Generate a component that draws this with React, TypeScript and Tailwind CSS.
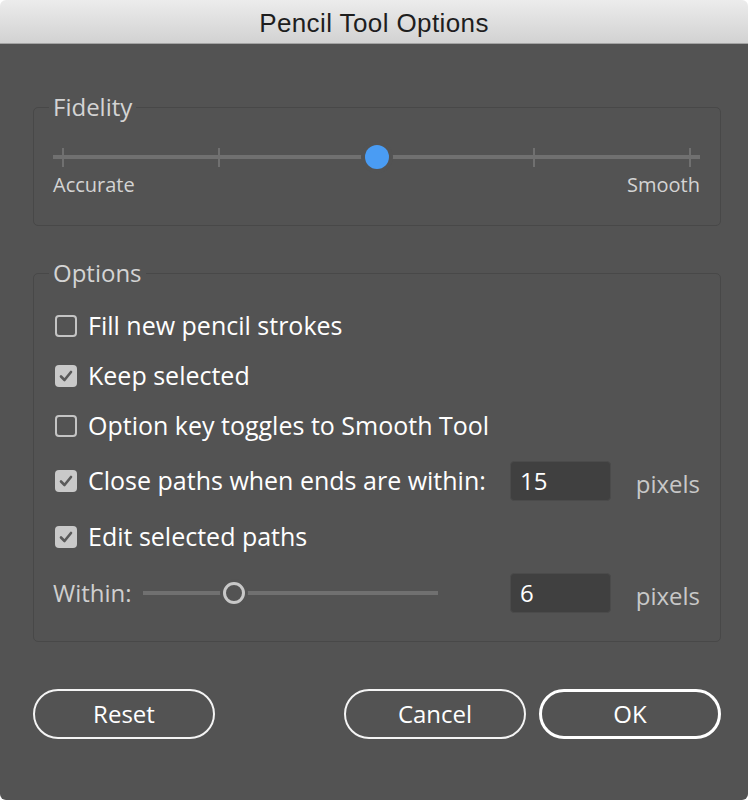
import React from 'react';

const font = { fontFamily: '"Open Sans", "Noto Sans", sans-serif' };

const Checkbox = ({ checked }: { checked: boolean }) =>
  checked ? (
    <span className="flex h-[22px] w-[22px] shrink-0 items-center justify-center rounded-[4px] bg-[#c9c9c9]">
      <svg width="14" height="12" viewBox="0 0 14 12" fill="none">
        <path d="M2 6.5 L5.5 10 L12 2" stroke="#5a5a5a" strokeWidth="2.6" strokeLinecap="round" strokeLinejoin="round" />
      </svg>
    </span>
  ) : (
    <span className="h-[22px] w-[22px] shrink-0 rounded-[4px] border-2 border-[#c4c4c4]" />
  );

const NumberBox = ({ value }: { value: string }) => (
  <div className="flex h-[40px] w-[101px] shrink-0 items-center rounded-[4px] border border-[#4b4b4b] bg-[#404040] pl-[9px] text-[24px] text-white">
    {value}
  </div>
);

const Option = ({ label, checked, h }: { label: string; checked: boolean; h: string }) => (
  <div className={`flex items-center gap-[11px] pl-[21px] ${h}`}>
    <Checkbox checked={checked} />
    <span className="text-[25px] text-white">{label}</span>
  </div>
);

export default function App() {
  const ticks = [10, 166, 324, 481, 637];

  return (
    <div className="h-[800px] w-[748px] bg-white" style={font}>
      <div className="flex h-full flex-col overflow-hidden rounded-[6px]">
        <div
          className="flex h-[44px] shrink-0 items-center justify-center border-b border-[#a3a3a3] bg-gradient-to-b from-[#ececec] to-[#d2d2d2] pt-[4px] text-[26px] tracking-[0.4px] text-[#1e1e1e]"
          style={{ fontFamily: '"Liberation Sans", Arial, sans-serif' }}
        >
          Pencil Tool Options
        </div>

        <div className="flex-1 bg-[#535353] pl-[33px] pr-[27px] pt-[50px]">
          <fieldset className="rounded-[5px] border border-[#484848] pl-[19px] pr-[20px] pb-[27px]">
            <legend className="-ml-[4px] h-[26px] px-[4px] text-[24px] leading-[26px] text-[#d4d4d4]">Fidelity</legend>
            <div className="relative mt-[25px] h-[24px]">
              <div className="absolute left-0 right-0 top-[10px] h-[4px] bg-[#707070]" />
              {ticks.map((t) => (
                <div key={t} className="absolute top-[3px] h-[19px] w-[2px] bg-[#707070]" style={{ left: t - 1 }} />
              ))}
              <div className="absolute top-0 h-[24px] w-[24px] rounded-full bg-[#4a9cf3] ring-[4px] ring-[#535353]" style={{ left: 312 }} />
            </div>
            <div className="mt-[3px] flex justify-between text-[20px] leading-[26px] text-[#d4d4d4]">
              <span>Accurate</span>
              <span>Smooth</span>
            </div>
          </fieldset>

          <fieldset className="mt-[34px] rounded-[5px] border border-[#484848] pb-[18px] pr-[20px]">
            <legend className="ml-[15px] h-[26px] px-[4px] text-[24px] leading-[26px] text-[#d4d4d4]">Options</legend>
            <div className="mt-[15px]" />
            <Option label="Fill new pencil strokes" checked={false} h="h-[50px]" />
            <Option label="Keep selected" checked h="h-[50px]" />
            <Option label="Option key toggles to Smooth Tool" checked={false} h="h-[50px]" />
            <div className="flex h-[60px] items-center pl-[21px]">
              <Checkbox checked />
              <span className="ml-[11px] flex-1 text-[25px] text-white">Close paths when ends are within:</span>
              <NumberBox value="15" />
              <span className="ml-[22px] w-[67px] pt-[6px] text-right text-[24px] text-[#c8c8c8]">pixels</span>
            </div>
            <Option label="Edit selected paths" checked h="h-[52px]" />
            <div className="flex h-[60px] items-center pl-[19px]">
              <span className="w-[90px] text-[24px] text-[#cfcfcf]">Within:</span>
              <div className="relative h-[22px] w-[295px]">
                <div className="absolute left-0 right-0 top-[9px] h-[4px] bg-[#707070]" />
                <div className="absolute top-0 h-[22px] w-[22px] rounded-full border-[3px] border-[#c8c8c8] bg-[#535353] ring-[3px] ring-[#535353]" style={{ left: 80 }} />
              </div>
              <div className="flex-1" />
              <NumberBox value="6" />
              <span className="ml-[22px] w-[67px] pt-[6px] text-right text-[24px] text-[#c8c8c8]">pixels</span>
            </div>
          </fieldset>

          <div className="mt-[47px] flex items-center text-[24px] text-white">
            <button className="flex h-[50px] w-[182px] items-center justify-center rounded-full border-2 border-[#f4f4f4]">Reset</button>
            <div className="flex-1" />
            <button className="flex h-[50px] w-[182px] items-center justify-center rounded-full border-2 border-[#f4f4f4]">Cancel</button>
            <button className="ml-[13px] flex h-[50px] w-[182px] items-center justify-center rounded-full border-[3px] border-white">OK</button>
          </div>
        </div>
      </div>
    </div>
  );
}
